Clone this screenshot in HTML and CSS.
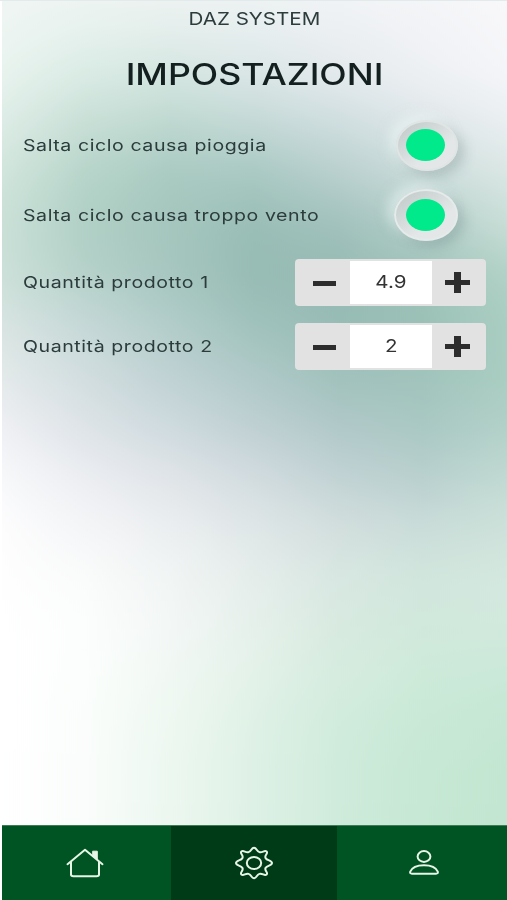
FILE: index.html
```html
<!DOCTYPE html>
<html lang="it">
<head>
<meta charset="utf-8">
<title>Impostazioni</title>
<link rel="stylesheet" href="styles.css">
</head>
<body>
<svg class="defs" width="0" height="0" aria-hidden="true"><filter id="soften" x="0" y="0" width="1" height="1" color-interpolation-filters="sRGB"><feGaussianBlur stdDeviation="0 22"/></filter></svg>
<div class="app">
  <div class="backdrop"></div>
  <header class="header">
    <div class="brand"><span class="wide">DAZ SYSTEM</span></div>
    <h1 class="title"><span class="wide">IMPOSTAZIONI</span></h1>
  </header>
  <main class="settings">
    <div class="row row-toggle"><span class="label wide">Salta ciclo causa pioggia</span><button class="toggle" aria-label="Pioggia"><span class="lamp"></span></button></div>
    <div class="row row-toggle"><span class="label wide">Salta ciclo causa troppo vento</span><button class="toggle toggle-focus" aria-label="Vento"><span class="lamp"></span></button></div>
    <div class="row row-qty"><span class="label wide">Quantità prodotto 1</span>
      <div class="stepper"><button class="step" aria-label="Meno"><span class="minus"></span></button><div class="value"><span class="wide">4.9</span></div><button class="step" aria-label="Più"><span class="plus"></span></button></div></div>
    <div class="row row-qty"><span class="label wide">Quantità prodotto 2</span>
      <div class="stepper"><button class="step" aria-label="Meno"><span class="minus"></span></button><div class="value"><span class="wide">2</span></div><button class="step" aria-label="Più"><span class="plus"></span></button></div></div>
  </main>
  <nav class="nav">
    <a class="tab"><svg width="38" height="30" viewBox="0 0 38 30"><path d="M1.5 16.2 19 1.8 36.5 16.2M5 14V26.5Q5 28.3 7.4 28.3H30.6Q33 28.3 33 26.5V14"/><path class="solid" d="M27 3.2h4.3v8.4L27 8.2z"/></svg></a>
    <a class="tab active"><svg width="40" height="34" viewBox="0 0 40 34"><path d="M20 1.7C22.8 1.7 22.4 5.2 25.4 6.1S30.6 3.8 32.6 5.6 30 9.6 31.6 12.1 38 14.5 38 17 33.2 19.4 31.6 21.9 34.6 26.6 32.6 28.4 28.4 27 25.4 27.9 22.8 32.3 20 32.3 17.6 28.8 14.6 27.9 9.4 30.2 7.4 28.4 10 24.4 8.4 21.9 2 19.5 2 17 6.8 14.6 8.4 12.1 5.4 7.4 7.4 5.6 11.6 7 14.6 6.1 17.2 1.7 20 1.7z"/><ellipse cx="20" cy="17" rx="7.2" ry="5.9"/></svg></a>
    <a class="tab"><svg width="32" height="28" viewBox="0 0 32 28"><ellipse cx="16" cy="7.5" rx="6.4" ry="5.4"/><path d="M4 24.7Q1.6 24.7 2.2 22.7C4.2 18 9.5 16.2 16 16.2S27.8 18 29.8 22.7Q30.4 24.7 28 24.7z"/></svg></a>
  </nav>
</div>
</body>
</html>
```
FILE: styles.css
```css
* { box-sizing: border-box; }
body { margin: 0; background: #fff; font-family: Inter, "Liberation Sans", sans-serif; color: #2c3c3c; }
button { border: 0; padding: 0; font: inherit; }
.defs { position: absolute; }
.app { position: relative; display: flex; flex-direction: column; height: 900px; padding-left: 2px; border-top: 1px solid #e3eaec; overflow: hidden; }

/* Colour mesh: one horizontal gradient per 50px band, softened vertically. */
.backdrop {
  position: absolute; left: 2px; right: 0; top: -101px; height: 1050px; z-index: -1; filter: url(#soften);
  background:
    linear-gradient(90deg,#f0f6f4,#f1f5f4,#f1f5f4,#f1f5f5,#f3f6f7,#f6f7f9,#f9f9fb) 0 0/100% 100px,
    linear-gradient(90deg,#eef5f2,#e8f2ee,#e6efed,#e8eff0,#edf0f3,#f2f3f6,#f7f7fa) 0 100px/100% 50px,
    linear-gradient(90deg,#e8f3ee,#d9ebe4,#d4e6e1,#dae6e6,#e4eaed,#edf0f3,#f4f5f8) 0 150px/100% 50px,
    linear-gradient(90deg,#dcebe5,#c7ded5,#bdd7cf,#c3d8d5,#cedddf,#dee6e8,#e9eef0) 0 200px/100% 50px,
    linear-gradient(90deg,#d0e5dc,#b6d4c9,#a8cac1,#a8c8c2,#b8cfcd,#cadcda,#d9e6e3) 0 250px/100% 50px,
    linear-gradient(90deg,#c9e0d7,#b0cfc5,#a4c6bd,#99beb6,#a1c1bc,#b2cdc8,#c7ddd6) 0 300px/100% 50px,
    linear-gradient(90deg,#cbe0d8,#b5d1c9,#a6c6bf,#97bcb4,#96bbb3,#9fc3b9,#b0d1c5) 0 350px/100% 50px,
    linear-gradient(90deg,#d8e4e2,#c5d8d7,#b2cdca,#a0c2bc,#97bcb5,#9ac0b6,#a9cdc1) 0 400px/100% 50px,
    linear-gradient(90deg,#e3e9e9,#d1dddf,#bfd1d3,#afc9c8,#a0c1bc,#a0c3bb,#a9cdc1) 0 450px/100% 50px,
    linear-gradient(90deg,#eeeff3,#dde3e7,#cddade,#becfd2,#b0c8c8,#a9c8c3,#b1d0c8) 0 500px/100% 50px,
    linear-gradient(90deg,#f7f8fa,#ebedf1,#e0e4e8,#d1dbdf,#c1d2d4,#b8cfce,#c0d9d2) 0 550px/100% 50px,
    linear-gradient(90deg,#fdfdfe,#f4f5f7,#ebeef0,#dfe6e7,#d2dedd,#cadcd9,#cde1da) 0 600px/100% 50px,
    linear-gradient(90deg,#fefefe,#fafbfb,#f1f5f4,#e5edeb,#d8e7e2,#d1e6dd,#d4e8df) 0 650px/100% 50px,
    linear-gradient(90deg,#fff,#fcfdfd,#f3f7f6,#e6f0eb,#d8eae0,#d1e8dc,#d2e9de) 0 700px/100% 50px,
    linear-gradient(90deg,#fff,#fbfefc,#f1f8f3,#e3f2e9,#d6ecdf,#cdead9,#cae9d8) 0 750px/100% 50px,
    linear-gradient(90deg,#fff,#fafdfb,#eef8f1,#dff1e6,#d0ebdc,#c9e9d6,#c5e7d4) 0 800px/100% 50px,
    linear-gradient(90deg,#fff,#fafdfb,#ecf7f0,#def1e6,#cfebdb,#c6e8d4,#c2e6d1) 0 850px/100% 200px;
  background-repeat: no-repeat;
}

/* Extended lettering */
.wide { display: inline-block; transform: scaleX(1.21); white-space: nowrap; }
.header { text-align: center; }
.brand { height: 34px; line-height: 36px; font-size: 17px; }
.title { margin: 0; height: 75px; line-height: 79px; font-size: 29.5px; font-weight: 500; color: #142020; }
.settings { flex: 1; }
.row { display: flex; align-items: center; justify-content: space-between; padding: 0 21px; }
.row-toggle { height: 70px; padding-right: 49px; }
.row-qty { height: 64px; }
.label { font-size: 16.2px; letter-spacing: .46px; transform-origin: 0 50%; }
.toggle { width: 62px; height: 51px; display: grid; place-items: center; border-radius: 50%; background: linear-gradient(145deg,#bfc9c8,#e3e7e7 65%); border: 2px solid #e0e4e4; box-shadow: 7px 6px 12px rgba(90,115,115,.25), -7px -5px 12px rgba(240,250,247,.5); }
.toggle-focus { width: 64px; height: 52px; border-color: #e5eaea; }
.lamp { width: 39px; height: 32px; margin-left: -4px; border-radius: 50%; background: #00e98b; }
.toggle-focus .lamp { margin-left: -2px; }
.stepper { display: grid; grid-template-columns: 53px 82px 52px; width: 191px; height: 47px; padding: 2px; border-radius: 4px; background: #e2e2e2; }
.step { display: grid; place-items: center; background: none; }
.value { display: grid; place-items: center; background: #fff; color: #333; font-size: 17px; }
.minus { width: 23px; height: 5px; background: #2d2d2d; margin-top: 2px; margin-left: 1px; }
.plus { width: 25px; height: 21px; margin-right: 1px; background: linear-gradient(#2d2d2d,#2d2d2d) 50% 50%/100% 5px no-repeat, linear-gradient(#2d2d2d,#2d2d2d) 50% 50%/7px 100% no-repeat; }
.nav { display: grid; grid-template-columns: 169px 166px 1fr; height: 75px; background: #005322; border-top: 1px solid #407b56; }
.tab { display: grid; place-items: center; }
.tab:first-child { padding-right: 4px; }
.tab:last-child { padding-left: 3px; }
.active { background: #003b18; }
.tab svg { fill: none; stroke: #e6f5e5; stroke-width: 2; stroke-linecap: round; stroke-linejoin: round; }
.tab .solid { fill: #e6f5e5; stroke-width: 1; }
```
